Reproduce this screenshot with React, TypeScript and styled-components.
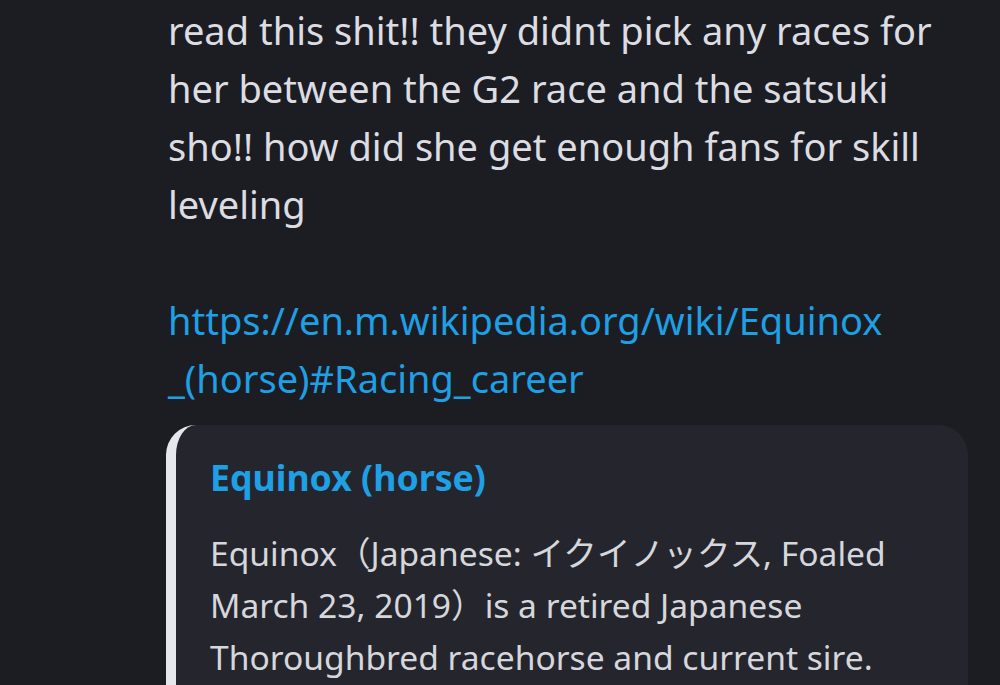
import * as React from 'react'
import styled, { createGlobalStyle } from 'styled-components'

const GlobalStyle = createGlobalStyle`
  html, body {
    margin: 0;
    padding: 0;
    background: #1c1d22;
    height: 100%;
    overflow: hidden;
  }
`

const Page = styled.div`
  box-sizing: border-box;
  width: 1000px;
  height: 685px;
  overflow: hidden;
  padding: 1px 42px 0 168px;
  background: #1c1d22;
  font-family: 'Noto Sans', 'Noto Sans CJK JP', sans-serif;
`

const Message = styled.div`
  font-size: 38px;
  line-height: 58px;
  color: #dcdde2;
  white-space: pre-wrap;
`

const Link = styled.a`
  display: block;
  color: #1f9fe4;
  text-decoration: none;
  word-break: break-all;
`

const Embed = styled.div`
  box-sizing: border-box;
  margin: 18px 0 0 -2px;
  width: 802px;
  border-left: 10px solid #e6e7ec;
  border-radius: 30px;
  background: #25262d;
  padding: 32px 40px 40px 34px;
`

const EmbedTitle = styled.div`
  font-size: 35.7px;
  line-height: 40px;
  font-weight: 700;
  color: #1f9fe4;
`

const EmbedText = styled.div`
  margin-top: 30px;
  font-size: 33.6px;
  line-height: 52px;
  color: #d6d7dc;
`

export default function App() {
  return (
    <Page>
      <GlobalStyle />
      <Message>
        {'read this shit!! they didnt pick any races for her between the G2 race and the satsuki sho!! how did she get enough fans for skill leveling\n\n'}
        <Link href="#">
          https://en.m.wikipedia.org/wiki/Equinox
          <br />
          _(horse)#Racing_career
        </Link>
      </Message>
      <Embed>
        <EmbedTitle>Equinox (horse)</EmbedTitle>
        <EmbedText>
          Equinox（Japanese: イクイノックス, Foaled March 23, 2019）is a retired Japanese Thoroughbred racehorse and current sire.
        </EmbedText>
      </Embed>
    </Page>
  )
}
